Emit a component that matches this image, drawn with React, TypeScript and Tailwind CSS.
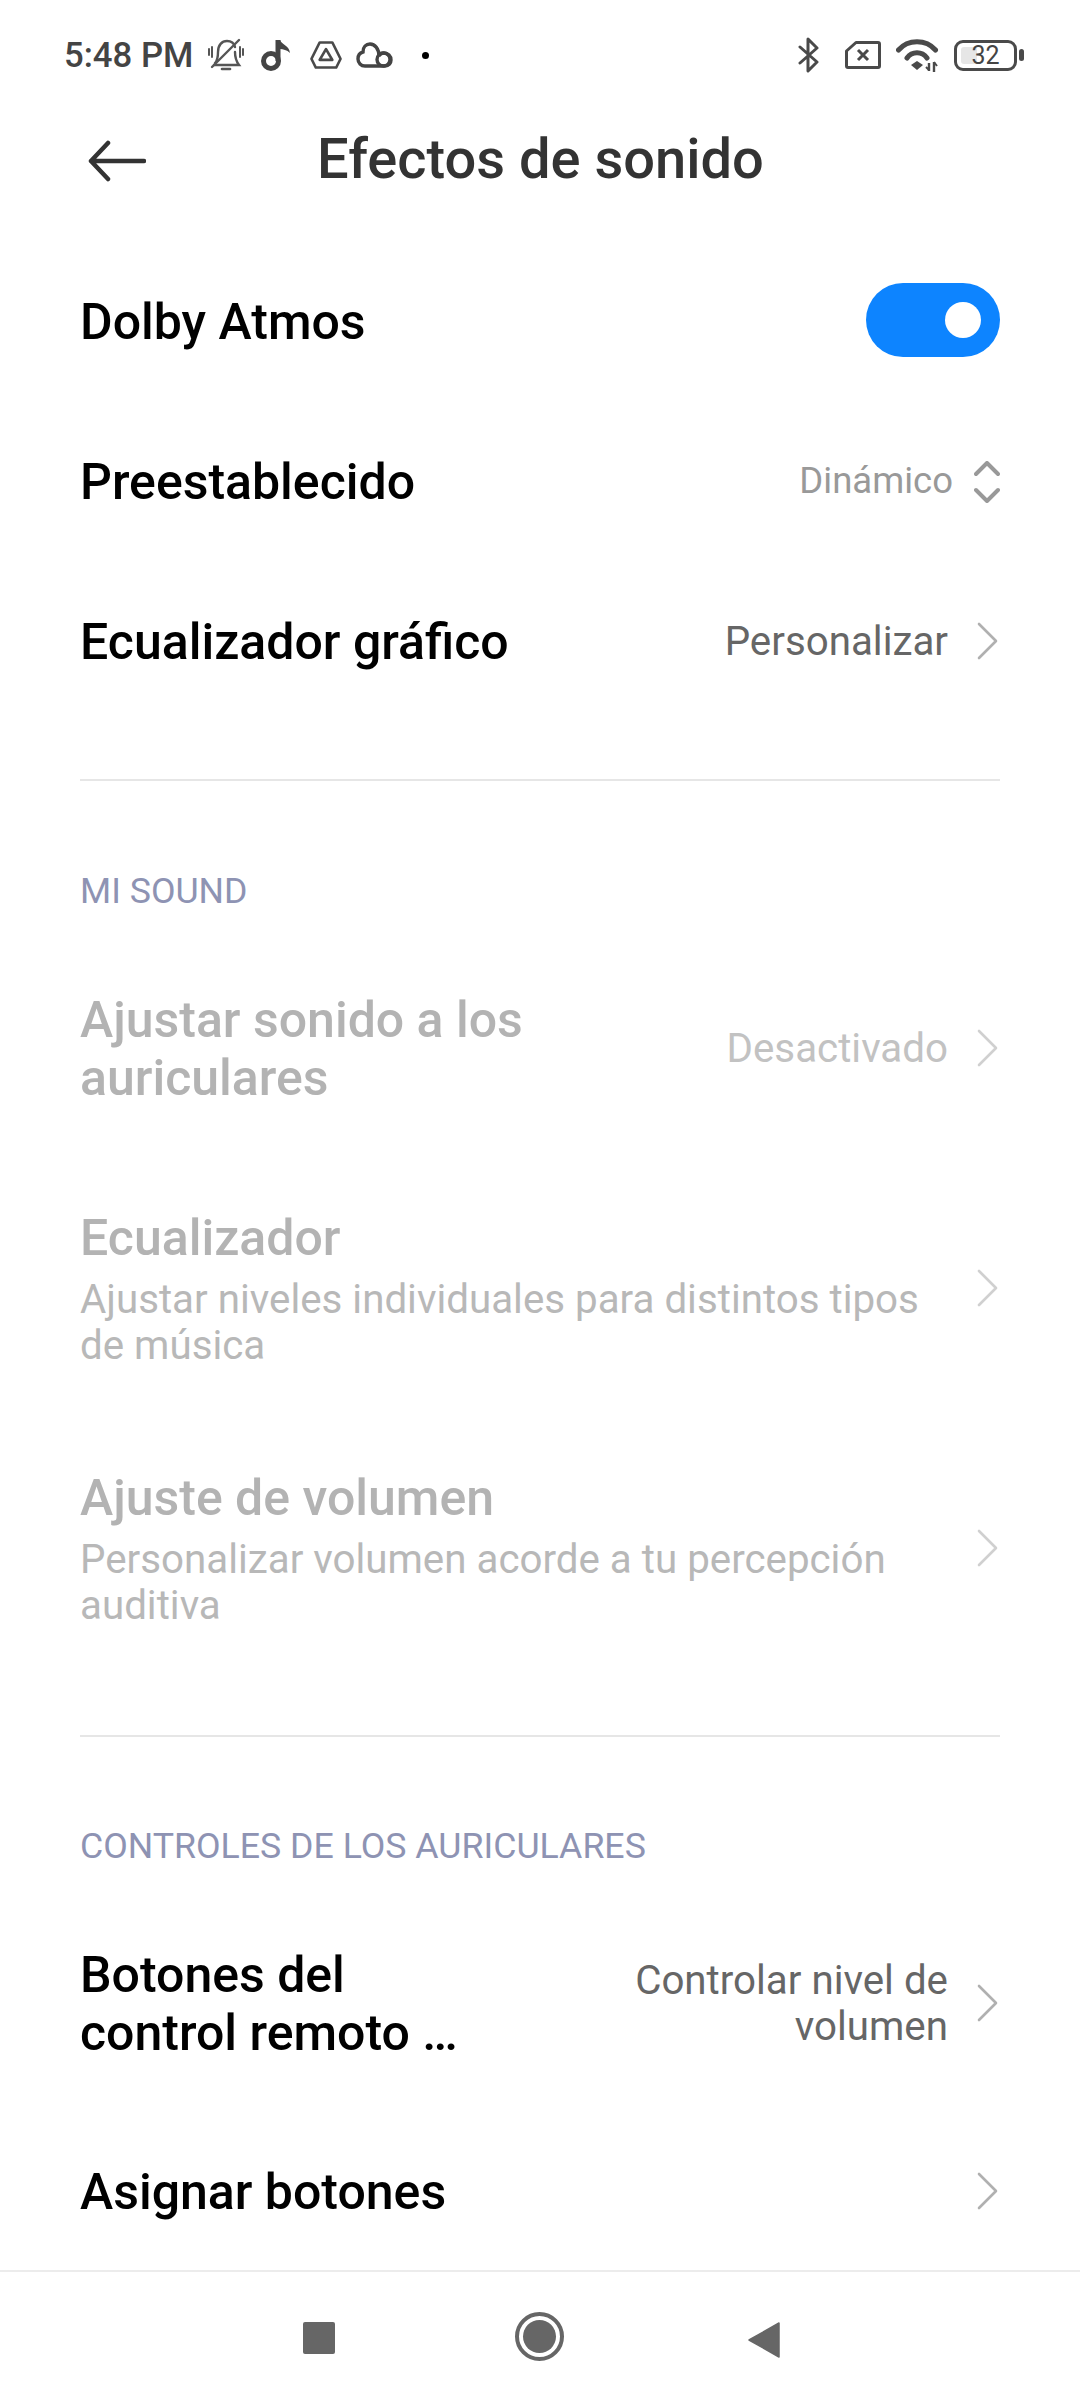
import React from 'react';

const font = { fontFamily: 'Roboto, sans-serif' };

function Chevron({ color = '#b0b0b0' }: { color?: string }) {
  return (
    <svg width="24" height="38" viewBox="0 0 24 38" fill="none" className="shrink-0 mb-[2px]">
      <path d="M3 2 L20 19 L3 36" stroke={color} strokeWidth="2.6" strokeLinecap="round" strokeLinejoin="round" />
    </svg>
  );
}

function StatusBar() {
  return (
    <div className="h-[110px] shrink-0 flex items-center text-[#444] relative">
      <div className="flex items-center h-[40px] ml-[64px]">
        <span className="text-[34.7px] font-medium leading-none w-[129px] whitespace-nowrap text-[#444]">5:48 PM</span>
        {/* silent bell */}
        <svg width="36" height="34" viewBox="0 0 36 34" fill="none" stroke="#555" strokeWidth="2.4" strokeLinecap="round" className="ml-[15px]">
          <path d="M7 25 C10 22 10 18 10 14 C10 7 14 3 19 3 C23 3 26 5 27 9" />
          <path d="M27 14 C27 19 28 23 31 27 H6" />
          <path d="M14 31 H22" strokeWidth="2.6" />
          <path d="M4 29 L31 2" />
          <path d="M1 11 V17 M4 9 V19 M32 9 V19 M35 11 V17" strokeWidth="2" />
        </svg>
        {/* tiktok note */}
        <svg width="30" height="33" viewBox="0 0 30 33" fill="none" className="ml-[17px]">
          <circle cx="10" cy="22" r="7.5" stroke="#444" strokeWidth="5" />
          <path d="M17 22 V1" stroke="#444" strokeWidth="5" />
          <path d="M19 1 C21 6 28 6 29 14 C26 11 22 10 19 10 Z" fill="#444" />
        </svg>
        {/* drive */}
        <svg width="32" height="30" viewBox="0 0 33 30" fill="none" stroke="#4a4a4a" strokeWidth="2.6" strokeLinejoin="round" className="ml-[19px]">
          <path d="M10 2 H23 L31.5 19 L27 28 H6 L1.5 19 Z" />
          <path d="M16.5 9 L23 20 H10 Z" strokeWidth="2.8" />
        </svg>
        {/* cloud */}
        <svg width="37" height="26" viewBox="0 0 37 26" fill="none" stroke="#444" strokeWidth="3.4" className="ml-[14px]">
          <path d="M9 24 H29 C33 24 35 21 35 18 C35 14 32 11 28 11 C26 11 24 12 23 14 C23 7 19 2 14 2 C10 2 7 5 7 10 C3 11 2 14 2 17 C2 21 5 24 9 24 Z" />
          <circle cx="27.5" cy="17.5" r="6.5" />
        </svg>
        <span className="w-[7px] h-[7px] rounded-full bg-black ml-[29px]" />
      </div>
      <div className="flex items-center h-[40px] ml-auto mr-[56px]">
        <svg width="22" height="36" viewBox="0 0 22 36" fill="none" stroke="#4a4a4a" strokeWidth="3" strokeLinejoin="round" strokeLinecap="round">
          <path d="M2 10 L19 25 L10 34 V2 L19 11 L2 26" />
        </svg>
        <svg width="36" height="28" viewBox="0 0 36 28" fill="none" stroke="#4a4a4a" className="ml-[25px]">
          <path d="M11 1.5 H33 C34 1.5 34.5 2 34.5 3 V25 C34.5 26 34 26.5 33 26.5 H3 C2 26.5 1.5 26 1.5 25 V10 Z" strokeWidth="3" strokeLinejoin="round" />
          <path d="M13 9 L23 19 M23 9 L13 19" strokeWidth="3" />
        </svg>
        <svg width="44" height="33" viewBox="0 0 44 33" fill="none" className="ml-[15px]">
          <path d="M2.5 11 C12 0 30 0 39.5 11" stroke="#4a4a4a" strokeWidth="5" strokeLinecap="round" />
          <path d="M11 19 C16 12 26 12 31 19" stroke="#4a4a4a" strokeWidth="5" strokeLinecap="round" />
          <path d="M15 26 L21 22 L27 26 L21 31 Z" fill="#4a4a4a" />
          <path d="M33 24 V32 M38 23 V33" stroke="#4a4a4a" strokeWidth="2.4" />
          <path d="M30 28 L33 31 M38 23 L41 27" stroke="#4a4a4a" strokeWidth="2" />
        </svg>
        <div className="relative w-[63px] h-[31px] ml-[14px] rounded-[9px] border-[3px] border-[#4a4a4a] flex items-center justify-center">
          <div className="absolute left-[4px] top-[4px] bottom-[4px] w-[16px] bg-[#e6e6e6] rounded-l-[3px]" />
          <span className="relative text-[25px] leading-none text-[#444]">32</span>
        </div>
        <div className="w-[5px] h-[12px] rounded-full bg-[#4a4a4a] ml-[2px]" />
      </div>
    </div>
  );
}

function Row({ title, value, h, disabled, valueColor }: { title: React.ReactNode; value?: React.ReactNode; h: string; disabled?: boolean; valueColor?: string }) {
  return (
    <div className={`flex items-center justify-between ${h}`}>
      <div className={`text-[50px] leading-[58px] font-medium ${disabled ? 'text-[#b3b3b3]' : 'text-black'}`}>{title}</div>
      <div className="flex items-center">
        {value && (
          <div className={`text-[40.3px] leading-[46px] text-right mr-[28px] ${valueColor ?? 'text-[#666]'}`}>{value}</div>
        )}
        <Chevron color={disabled ? '#d0d0d0' : '#b0b0b0'} />
      </div>
    </div>
  );
}

function SubRow({ title, sub, h }: { title: string; sub: React.ReactNode; h: string }) {
  return (
    <div className={`flex items-center justify-between ${h}`}>
      <div className="w-[860px]">
        <div className="text-[50px] leading-[58px] font-medium text-[#b3b3b3]">{title}</div>
        <div className="text-[40.3px] leading-[46px] text-[#b8b8b8] mt-[10px]">{sub}</div>
      </div>
      <Chevron color="#d0d0d0" />
    </div>
  );
}

export default function App() {
  return (
    <div className="w-[1080px] h-[2400px] bg-white flex flex-col overflow-hidden" style={font}>
      <StatusBar />
      {/* header */}
      <div className="h-[96px] shrink-0 flex items-center relative">
        <svg width="58" height="44" viewBox="0 0 58 44" fill="none" stroke="#333" strokeWidth="4.5" strokeLinecap="round" strokeLinejoin="round" className="ml-[88px] mt-[6px] mr-[1px]">
          <path d="M56 22 H3 M20 4 L3 22 L20 40" />
        </svg>
        <h1 className="text-[56px] font-medium text-[#333] leading-none ml-[170px] mt-[1px]">Efectos de sonido</h1>
      </div>
      <div className="px-[80px] flex flex-col shrink-0">
        <div className="flex items-center justify-between h-[162px] mt-[33px]">
          <span className="text-[50px] leading-[58px] font-medium text-black pt-[4px]">Dolby Atmos</span>
          <div className="w-[134px] h-[74px] rounded-full bg-[#0d84ff] flex items-center justify-end pr-[19px]">
            <div className="w-[36px] h-[36px] rounded-full bg-white" />
          </div>
        </div>
        <div className="flex items-center justify-between h-[161px]">
          <span className="text-[50px] leading-[58px] font-medium text-black">Preestablecido</span>
          <div className="flex items-center">
            <span className="text-[36.5px] text-[#999] mr-[21px]">Dinámico</span>
            <svg width="26" height="42" viewBox="0 0 26 42" fill="none" stroke="#999" strokeWidth="4" strokeLinecap="round" strokeLinejoin="round">
              <path d="M2 13 L13 2 L24 13 M2 29 L13 40 L24 29" />
            </svg>
          </div>
        </div>
        <Row title="Ecualizador gráfico" value="Personalizar" h="h-[160px]" />
        <div className="h-[2px] bg-[#e6e6e6] mt-[57px]" />
        <div className="text-[35.7px] leading-[40px] text-[#8e93b3] mt-[90px]">MI SOUND</div>
        <Row
          disabled
          title={<>Ajustar sonido a los<br />auriculares</>}
          value="Desactivado"
          valueColor="text-[#c2c2c2]"
          h="h-[180px] mt-[48px]"
        />
        <SubRow
          title="Ecualizador"
          sub={<>Ajustar niveles individuales para distintos tipos<br />de música</>}
          h="h-[180px] mt-[60px]"
        />
        <SubRow
          title="Ajuste de volumen"
          sub={<>Personalizar volumen acorde a tu percepción<br />auditiva</>}
          h="h-[180px] mt-[80px]"
        />
        <div className="h-[2px] bg-[#e6e6e6] mt-[96px]" />
        <div className="text-[35.7px] leading-[40px] text-[#8e93b3] mt-[89px]">CONTROLES DE LOS AURICULARES</div>
        <Row
          title={<>Botones del<br />control remoto …</>}
          value={<>Controlar nivel de<br />volumen</>}
          h="h-[180px] mt-[48px]"
        />
        <Row title="Asignar botones" h="h-[156px] mt-[20px]" />
      </div>
      {/* nav bar */}
      <div className="mt-auto h-[131px] shrink-0 border-t-2 border-[#ececec] flex items-start relative">
        <div className="w-[32px] h-[32px] rounded-[2px] bg-[#666] ml-[303px] mt-[50px]" />
        <div className="w-[49px] h-[49px] rounded-full border-[4px] border-[#666] ml-[180px] mt-[40px] flex items-center justify-center">
          <div className="w-[33px] h-[33px] rounded-full bg-[#666]" />
        </div>
        <svg width="32" height="38" viewBox="0 0 32 38" className="ml-[184px] mt-[49px]">
          <path d="M31 2 V36 L1 19 Z" fill="#666" stroke="#666" strokeWidth="1.5" strokeLinejoin="round" />
        </svg>
      </div>
    </div>
  );
}
